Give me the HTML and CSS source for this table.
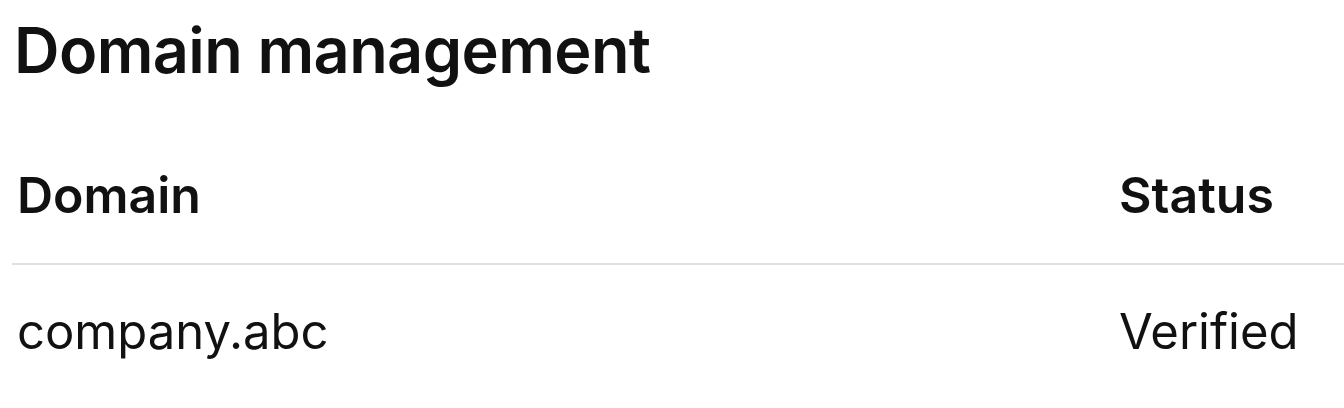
FILE: index.html
```html
<!DOCTYPE html>
<html>
<head>
<meta charset="utf-8">
<link rel="stylesheet" href="styles.css">
</head>
<body>
<div class="page">
  <h1 class="title">Domain management</h1>
  <div class="table">
    <div class="row head">
      <div class="cell">Domain</div>
      <div class="cell">Status</div>
    </div>
    <div class="row">
      <div class="cell">company.abc</div>
      <div class="cell">Verified</div>
    </div>
  </div>
</div>
</body>
</html>
```
FILE: styles.css
```css
html, body {
  margin: 0;
  padding: 0;
  background: #ffffff;
}
body {
  font-family: Inter, "Noto Sans", sans-serif;
  color: #111111;
}
.page {
  padding: 0 0 0 12px;
}
.title {
  margin: 0;
  padding-top: 10px;
  padding-left: 2px;
  font-size: 63px;
  line-height: 80px;
  font-weight: 600;
  letter-spacing: -0.6px;
}
.table {
  margin-top: 75px;
}
.row {
  display: grid;
  grid-template-columns: 1fr 230px;
  font-size: 49px;
  line-height: 60px;
}
.row.head {
  font-weight: 600;
  font-size: 50px;
  border-bottom: 2px solid #e0e0e0;
  height: 98px;
  align-items: start;
}
.cell {
  padding-left: 5px;
}
.row:not(.head) .cell {
  padding-top: 37px;
}
```
